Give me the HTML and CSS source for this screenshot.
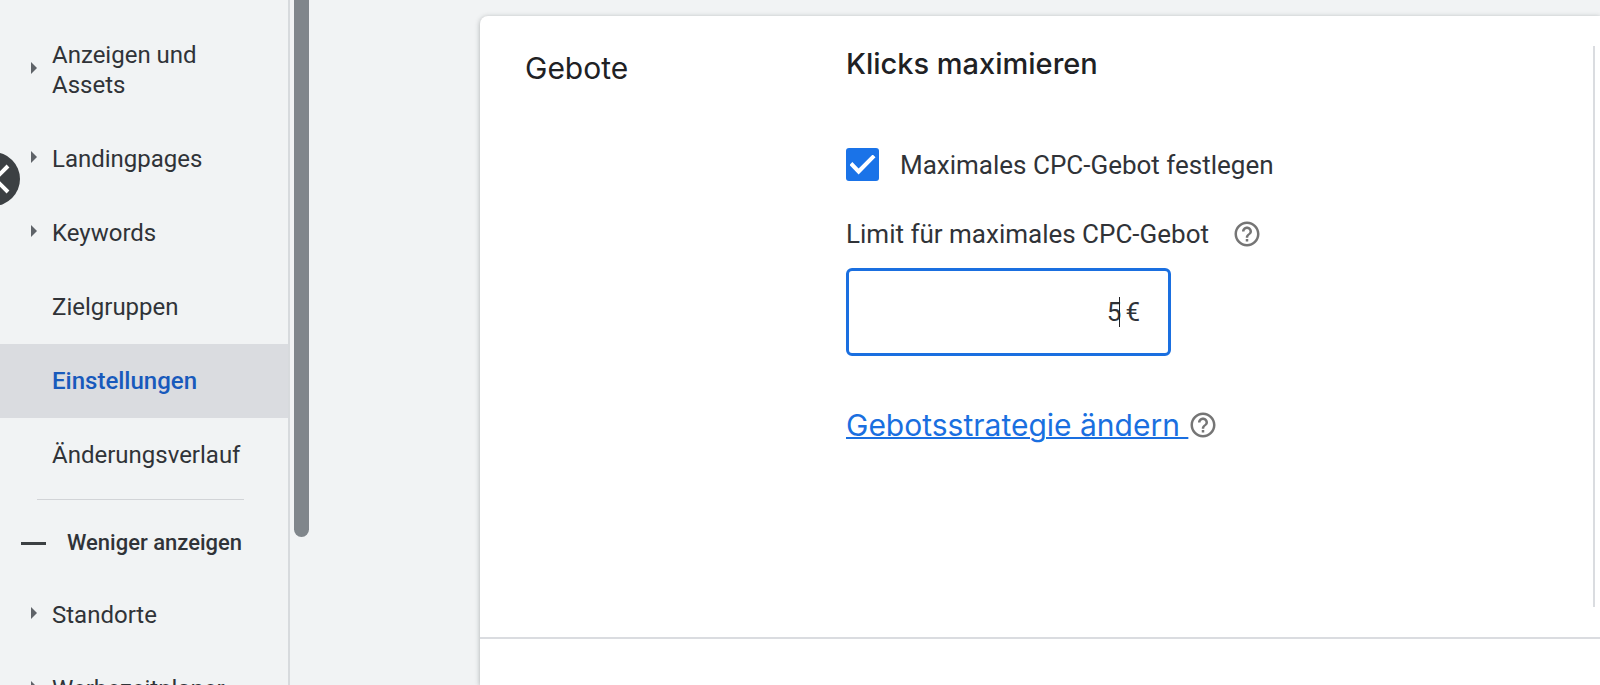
FILE: index.html
```html
<!DOCTYPE html>
<html lang="de">
<head>
<meta charset="utf-8">
<title>Einstellungen – Gebote</title>
<link rel="stylesheet" href="styles.css">
</head>
<body>
<div class="app">
  <nav class="sidebar" aria-label="Kampagne">
    <ul class="nav-list">
      <li><a class="nav-item expandable" href="#">Anzeigen und Assets</a></li>
      <li><a class="nav-item expandable" href="#">Landingpages</a></li>
      <li><a class="nav-item expandable" href="#">Keywords</a></li>
      <li><a class="nav-item" href="#">Zielgruppen</a></li>
      <li><a class="nav-item active" href="#" aria-current="page">Einstellungen</a></li>
      <li><a class="nav-item" href="#">Änderungsverlauf</a></li>
    </ul>
    <hr class="nav-divider">
    <button class="nav-toggle" type="button"><span class="minus"></span>Weniger anzeigen</button>
    <ul class="nav-list">
      <li><a class="nav-item expandable" href="#">Standorte</a></li>
      <li><a class="nav-item expandable" href="#">Werbezeitplaner</a></li>
    </ul>
  </nav>
  <button class="collapse" type="button" aria-label="Menü einklappen">
    <svg viewBox="0 0 54 54" aria-hidden="true"><path d="M42 14 29 27l13 13" fill="none" stroke="#fff" stroke-width="4"/></svg>
  </button>
  <div class="scroll-track"><div class="scroll-thumb"></div></div>
  <main class="content">
    <section class="card">
      <div class="panel">
        <h2 class="panel-title">Gebote</h2>
        <div class="panel-body">
          <h3 class="strategy">Klicks maximieren</h3>
          <label class="check-row">
            <input class="check" type="checkbox" checked>
            <span>Maximales CPC-Gebot festlegen</span>
          </label>
          <div class="label-row">
            <label for="limit">Limit für maximales CPC-Gebot</label>
            <button class="help" type="button" aria-label="Hilfe">
              <svg viewBox="0 0 24 24" aria-hidden="true"><path fill="currentColor" d="M11 18h2v-2h-2v2zm1-16C6.480 2 2 6.480 2 12s4.480 10 10 10 10-4.480 10-10S17.520 2 12 2zm0 18c-4.410 0-8-3.590-8-8s3.590-8 8-8 8 3.590 8 8-3.590 8-8 8zm0-14c-2.210 0-4 1.790-4 4h2c0-1.100.9-2 2-2s2 .9 2 2c0 2-3 1.750-3 5h2c0-2.250 3-2.500 3-5 0-2.210-1.790-4-4-4z"/></svg>
            </button>
          </div>
          <div class="field">
            <input class="amount" id="limit" type="text" value="5">
            <span class="unit"><span class="caret"></span>€</span>
          </div>
          <div class="link-row">
            <a class="change" href="#">Gebotsstrategie ändern&nbsp;</a>
            <button class="help" type="button" aria-label="Hilfe">
              <svg viewBox="0 0 24 24" aria-hidden="true"><path fill="currentColor" d="M11 18h2v-2h-2v2zm1-16C6.480 2 2 6.480 2 12s4.480 10 10 10 10-4.480 10-10S17.520 2 12 2zm0 18c-4.410 0-8-3.590-8-8s3.590-8 8-8 8 3.590 8 8-3.590 8-8 8zm0-14c-2.210 0-4 1.790-4 4h2c0-1.100.9-2 2-2s2 .9 2 2c0 2-3 1.750-3 5h2c0-2.250 3-2.500 3-5 0-2.210-1.790-4-4-4z"/></svg>
            </button>
          </div>
        </div>
      </div>
    </section>
  </main>
</div>
</body>
</html>
```
FILE: styles.css
```css
* { box-sizing: border-box; }
body {
  margin: 0;
  background: #f1f3f4;
  color: #303338;
  font-family: Roboto, "Liberation Sans", sans-serif;
  font-size: 24px;
  line-height: 30px;
}
button { border: 0; padding: 0; background: none; font: inherit; color: inherit; }
svg { display: block; width: 100%; height: 100%; }

.app { display: flex; height: 100vh; overflow: hidden; }

.sidebar {
  flex: 0 0 290px;
  padding-top: 18px;
  border-right: 2px solid #d7dadd;
  overflow: hidden;
}
.nav-list { list-style: none; margin: 0; padding: 0; }
.nav-item {
  position: relative;
  display: block;
  padding: 22px 48px 22px 52px;
  color: inherit;
  text-decoration: none;
}
.nav-item.active { background: #dadce0; color: #185abc; font-weight: 500; }
.expandable::before {
  content: "";
  position: absolute;
  left: 31px;
  top: calc(50% - 8px);
  border: solid transparent;
  border-width: 6px 0 6px 6px;
  border-left-color: #5f6368;
}
.nav-divider { margin: 7px 44px 0 37px; border: 0; border-top: 1px solid #d2d4d7; }
.nav-toggle {
  display: flex;
  align-items: center;
  gap: 21px;
  padding: 28px 0 20px 21px;
  font-size: 22px;
  font-weight: 500;
}
.minus { width: 25px; height: 3px; background: #3c4043; }

.collapse {
  position: absolute;
  left: -34px;
  top: 152px;
  width: 54px;
  height: 54px;
  border-radius: 50%;
  background: #3c4043;
}

.scroll-track { flex: 0 0 19px; padding-left: 4px; }
.scroll-thumb {
  height: 537px;
  border-radius: 0 0 8px 8px;
  background: #80868b;
}

.content { flex: 1; display: flex; padding: 16px 0 0 171px; }
.card {
  flex: 1;
  border-radius: 8px 0 0 0;
  background: #fff;
  box-shadow: 0 1px 5px rgba(60, 64, 67, .4);
}
.panel {
  display: grid;
  grid-template-columns: 321px 1fr;
  padding: 30px 5px 30px 45px;
  border-bottom: 2px solid #dadce0;
}
.panel-title, .strategy {
  margin: 0;
  color: #202124;
  font-family: Inter, Roboto, sans-serif;
  font-size: 29px;
  font-weight: 500;
  line-height: 36px;
}
.panel-title { padding-top: 4px; font-size: 30px; font-weight: 400; }
.panel-body {
  min-height: 561px;
  border-right: 2px solid #dadce0;
}
.check-row { display: flex; align-items: center; gap: 21px; margin-top: 66px; font-size: 26px; }
.check {
  appearance: none;
  width: 33px;
  height: 33px;
  margin: 0;
  border-radius: 3px;
  background: #1a73e8;
  display: grid;
  place-items: center;
}
.check:checked::before {
  content: "";
  width: 26px;
  height: 20px;
  background: #fff;
  clip-path: polygon(0 52%, 11% 38%, 35% 70%, 89% 0, 100% 14%, 35% 100%);
}
.label-row { display: flex; align-items: center; gap: 23px; margin-top: 38px; font-size: 26px; }
.help { width: 30px; height: 30px; color: #757575; }
.field {
  display: flex;
  align-items: center;
  width: 325px;
  height: 88px;
  margin-top: 19px;
  padding-right: 28px;
  border: 3px solid #1a6fe0;
  border-radius: 6px;
}
.amount {
  flex: 1;
  min-width: 0;
  border: 0;
  outline: 0;
  padding: 0;
  background: none;
  color: inherit;
  font: inherit;
  font-size: 26px;
  text-align: right;
}
.unit { position: relative; padding-left: 4px; font-size: 26px; }
.caret { position: absolute; left: -2px; top: 0; width: 1px; height: 30px; background: #202124; }
.link-row { display: flex; align-items: center; margin-top: 51px; }
.change {
  color: #1a6fe0;
  font-family: Inter, Roboto, sans-serif;
  font-size: 30px;
  font-weight: 400;
  line-height: 36px;
  text-decoration-thickness: 2px;
}
```
